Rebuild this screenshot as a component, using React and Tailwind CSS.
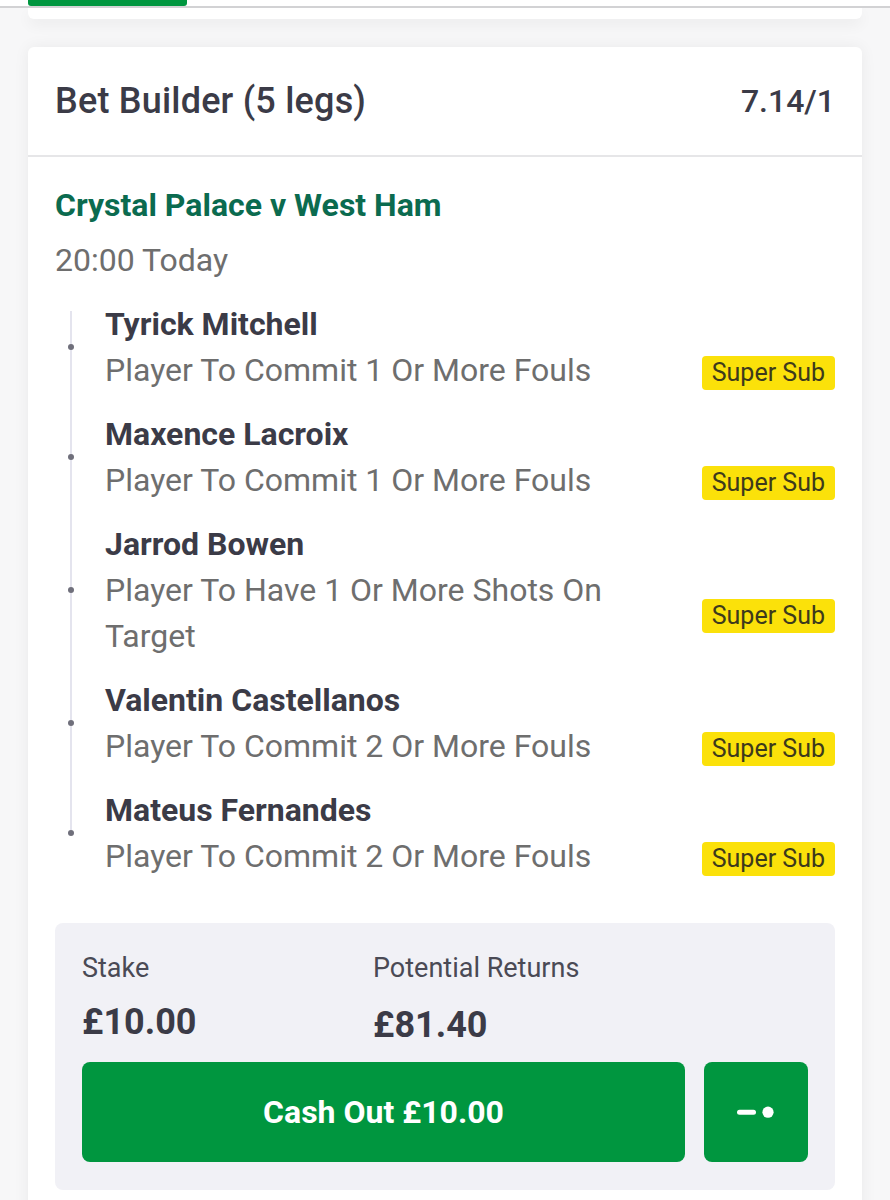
import React from 'react';

const LEGS = [
  { player: 'Tyrick Mitchell', market: 'Player To Commit 1 Or More Fouls' },
  { player: 'Maxence Lacroix', market: 'Player To Commit 1 Or More Fouls' },
  { player: 'Jarrod Bowen', market: 'Player To Have 1 Or More Shots On Target' },
  { player: 'Valentin Castellanos', market: 'Player To Commit 2 Or More Fouls' },
  { player: 'Mateus Fernandes', market: 'Player To Commit 2 Or More Fouls' },
];

function CashOutIcon() {
  return (
    <svg width="38" height="12" viewBox="0 0 38 12" aria-hidden="true">
      <rect x="0" y="3.8" width="19" height="5" rx="2.5" fill="#ffffff" />
      <circle cx="31" cy="6.2" r="5.6" fill="#ffffff" />
    </svg>
  );
}

function Leg({ player, market }) {
  return (
    <div className="relative">
      <span className="absolute left-[-37px] top-1/2 -mt-[3px] w-[6px] h-[6px] rounded-full bg-[#6f6f7b]" />
      <div className="text-[32px] leading-[46px] font-bold text-[#3b3b47]">{player}</div>
      <div className="flex items-center justify-between">
        <div className="max-w-[540px] text-[32px] leading-[46px] text-[#6e6e6e]">{market}</div>
        <span className="shrink-0 mt-[5px] bg-[#fbe10a] text-[#3d3a1c] text-[25px] leading-[34px] px-[10px] rounded-[4px]">
          Super Sub
        </span>
      </div>
    </div>
  );
}

export default function App() {
  return (
    <div
      className="min-h-[1300px] bg-[#f7f7f8] pb-10"
      style={{ fontFamily: 'Roboto, "Noto Sans", "Liberation Sans", sans-serif' }}
    >
      {/* tab strip of the card above */}
      <div className="relative h-[8px] border-b-2 border-[#d2d2d4] bg-white">
        <div className="absolute left-[28px] top-0 w-[159px] h-[6px] rounded-b-[3px] bg-[#00963f]" />
      </div>
      <div className="mx-[28px] h-[11px] bg-white rounded-b-[6px] shadow-[0_6px_14px_rgba(0,0,0,0.05)]" />

      <div className="mx-[28px] mt-[28px] bg-white rounded-t-[6px] shadow-[0_0_16px_rgba(0,0,0,0.06)]">
        <div className="h-[110px] px-[27px] flex items-center justify-between border-b-2 border-[#e6e6e8]">
          <h1 className="text-[36px] font-medium tracking-[0.2px] text-[#3b3b47]">Bet Builder (5 legs)</h1>
          <span className="text-[32px] font-medium text-[#3b3b47]">7.14/1</span>
        </div>

        <div className="px-[27px] pt-[28px] pb-[40px]">
          <div className="text-[32px] leading-[40px] font-bold text-[#0b6b4f]">
            Crystal Palace v West Ham
          </div>
          <div className="mt-[15px] text-[32px] leading-[40px] text-[#6e6e6e]">20:00 Today</div>

          <div className="relative mt-[21px] pl-[50px] flex flex-col gap-[18px]">
            <span className="absolute left-[15px] top-[10px] bottom-[44px] w-[2px] bg-[#e4e4ee]" />
            {LEGS.map((leg) => (
              <Leg key={leg.player} {...leg} />
            ))}
          </div>

          <div className="mt-[44px] bg-[#f1f1f6] rounded-[8px] px-[27px] pt-[26px] pb-[28px]">
            <div className="flex">
              <div className="w-[291px]">
                <div className="text-[27px] leading-[38px] text-[#4a4a55]">Stake</div>
                <div className="mt-[12px] text-[36px] leading-[46px] font-bold text-[#3b3b47]">£10.00</div>
              </div>
              <div>
                <div className="text-[27px] leading-[38px] text-[#4a4a55]">Potential Returns</div>
                <div className="mt-[15px] text-[36px] leading-[46px] font-bold text-[#3b3b47]">£81.40</div>
              </div>
            </div>
            <div className="mt-[14px] flex gap-[19px]">
              <button
                type="button"
                className="flex-1 h-[100px] rounded-[8px] bg-[#00963f] text-white text-[32px] font-bold"
              >
                Cash Out £10.00
              </button>
              <button
                type="button"
                className="w-[104px] h-[100px] rounded-[8px] bg-[#00963f] flex items-center justify-center"
                aria-label="Partial cash out"
              >
                <CashOutIcon />
              </button>
            </div>
          </div>
        </div>
      </div>
    </div>
  );
}
